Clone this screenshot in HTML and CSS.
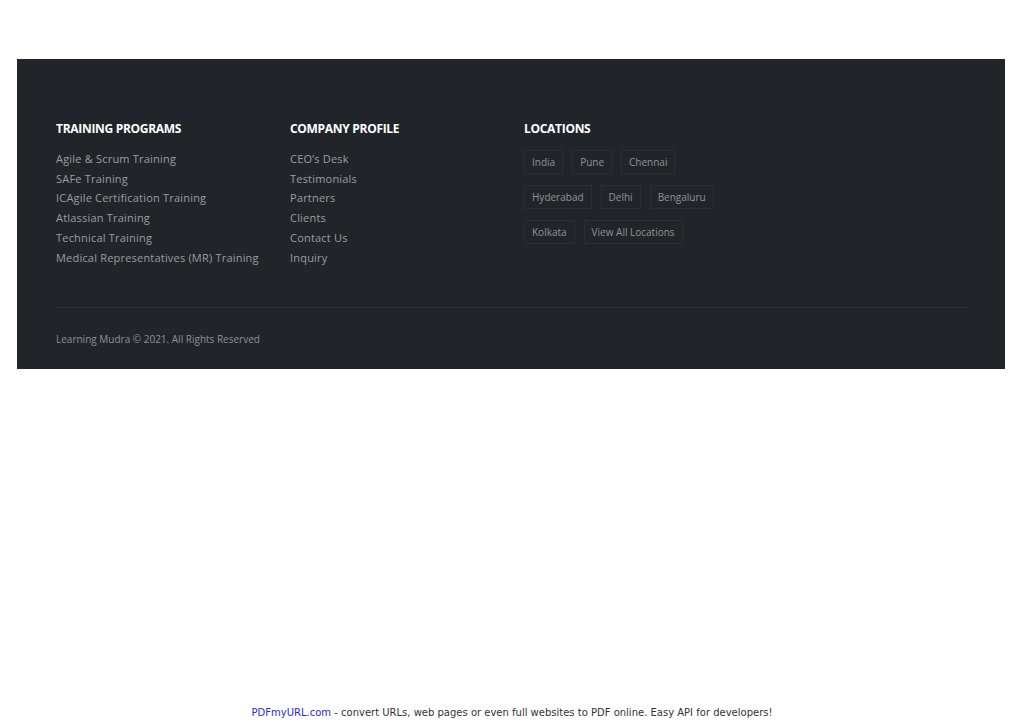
FILE: index.html
```html
<!DOCTYPE html>
<html lang="en">
<head>
  <meta charset="UTF-8" />
  <meta name="viewport" content="width=device-width, initial-scale=1.0"/>
  <title>Learning Mudra</title>
  <link rel="stylesheet" href="styles.css">
</head>
<body>
  <footer class="site-footer">
    <div class="footer-cols">
      <div class="footer-col">
        <h4>TRAINING PROGRAMS</h4>
        <ul class="footer-links">
          <li><a href="#">Agile &amp; Scrum Training</a></li>
          <li><a href="#">SAFe Training</a></li>
          <li><a href="#">ICAgile Certification Training</a></li>
          <li><a href="#">Atlassian Training</a></li>
          <li><a href="#">Technical Training</a></li>
          <li><a href="#">Medical Representatives (MR) Training</a></li>
        </ul>
      </div>
      <div class="footer-col">
        <h4>COMPANY PROFILE</h4>
        <ul class="footer-links">
          <li><a href="#">CEO’s Desk</a></li>
          <li><a href="#">Testimonials</a></li>
          <li><a href="#">Partners</a></li>
          <li><a href="#">Clients</a></li>
          <li><a href="#">Contact Us</a></li>
          <li><a href="#">Inquiry</a></li>
        </ul>
      </div>
      <div class="footer-col locations">
        <h4>LOCATIONS</h4>
        <div class="tags">
          <a href="#" class="tag">India</a>
          <a href="#" class="tag">Pune</a>
          <a href="#" class="tag">Chennai</a>
          <a href="#" class="tag">Hyderabad</a>
          <a href="#" class="tag">Delhi</a>
          <a href="#" class="tag">Bengaluru</a>
          <a href="#" class="tag">Kolkata</a>
          <a href="#" class="tag">View All Locations</a>
        </div>
      </div>
    </div>
    <div class="footer-bottom">Learning Mudra © 2021. All Rights Reserved</div>
  </footer>
  <div class="pdf-note"><a href="#">PDFmyURL.com</a> - convert URLs, web pages or even full websites to PDF online. Easy API for developers!</div>
</body>
</html>
```

FILE: styles.css
```css
body {
  margin: 0;
  padding: 0;
  background-color: #fff;
  font-family: "Open Sans", Arial, sans-serif;
  height: 723px;
  position: relative;
}
.site-footer {
  margin: 59px 19px 0 17px;
  background-color: #212529;
  padding: 60px 37px 0 39px;
  box-sizing: border-box;
  height: 310px;
}
.footer-cols {
  display: grid;
  grid-template-columns: 234px 234px 1fr;
  height: 188px;
  border-bottom: 1px solid #2a2f34;
}
.footer-col h4 {
  margin: 0 0 10px;
  color: #fff;
  font-size: 12px;
  font-weight: 700;
  letter-spacing: -0.3px;
  line-height: 20px;
}
.footer-links {
  list-style: none;
  margin: 0;
  padding: 0;
}
.footer-links li {
  line-height: 19.7px;
  font-size: 11px;
}
.footer-links a {
  color: #9a9da0;
  text-decoration: none;
  letter-spacing: 0.2px;
}
.tags {
  display: flex;
  flex-wrap: wrap;
  gap: 11px 9px;
  width: 200px;
  margin-top: 11px;
}
.tag {
  display: block;
  height: 24px;
  line-height: 22px;
  padding: 0 7px;
  box-sizing: border-box;
  border: 1px solid #2a2e33;
  color: #909396;
  font-size: 10px;
  text-decoration: none;
}
.footer-bottom {
  padding-top: 24px;
  font-size: 10px;
  color: #8e9194;
  line-height: 14px;
}
.pdf-note {
  position: absolute;
  left: 0;
  right: 0;
  top: 707px;
  text-align: center;
  font-family: "DejaVu Sans", Verdana, sans-serif;
  font-size: 10px;
  color: #333;
}
.pdf-note a {
  color: #2a2ad6;
  text-decoration: none;
}
```
